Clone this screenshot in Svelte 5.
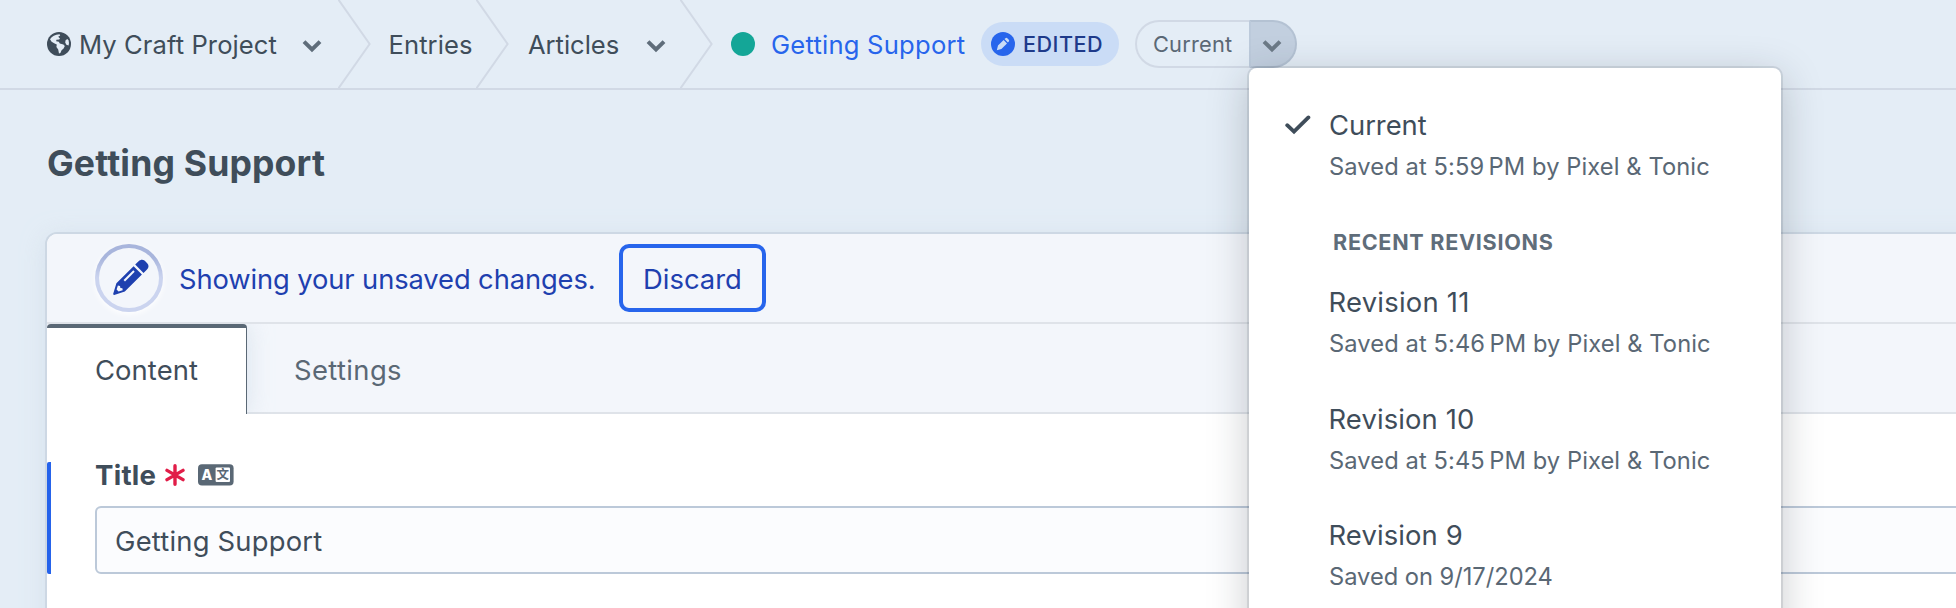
<script>
  const revisions = [
    { name: 'Revision 11', note: 'Saved at 5:46\u202fPM by Pixel & Tonic', cls: 'r11' },
    { name: 'Revision 10', note: 'Saved at 5:45\u202fPM by Pixel & Tonic', cls: '' },
    { name: 'Revision 9', note: 'Saved on 9/17/2024', cls: 'dated' }
  ];
  let title = $state('Getting Support');
</script>

{#snippet chevron()}
  <svg class="chevron" width="20" height="14" viewBox="0 0 20 14"><path d="M2 2.6 10 10.4 18 2.6" /></svg>
{/snippet}

{#snippet separator()}
  <svg class="sep" width="34" height="88" viewBox="0 0 34 88"><path d="M0 -1 31.6 44 0 89" /></svg>
{/snippet}

<div class="page">
  <header>
    <nav>
      <div class="crumb project">
        <svg class="globe" width="24" height="24" viewBox="0 0 24 24">
          <circle cx="12" cy="12" r="12" fill="#3f4d5a" />
          <path fill="#e4edf6" d="M3 7.2C5 4.4 8 2.6 12.6 2.2L13.2 3.6 11.2 4.8 13 6.4 12.2 7.6 9.4 7.8 9.2 9.2 11.8 9.8 12.8 11.4 16.4 12.6 17.8 14 16.6 16.6 14.6 18.2 13.4 21 12 21.6 11.2 17.6 9.4 15 9.8 12.4 7.6 11.4 4.6 9.8Z" />
          <path fill="#e4edf6" d="M18.6 8.2 20.4 7 21.6 8.4Q22.4 11 21.6 13.4L19.4 12.8 18.2 10.6Z" />
        </svg>
        <span class="label">My Craft Project</span>
        {@render chevron()}
      </div>
      {@render separator()}
      <div class="crumb section"><span class="label">Entries</span></div>
      {@render separator()}
      <div class="crumb group"><span class="label art">Articles</span>{@render chevron()}</div>
      {@render separator()}
      <div class="crumb entry">
        <i class="dot"></i>
        <a class="label" href="#entry">Getting Support</a>
      </div>
    </nav>
    <div class="badge">
      <svg width="24" height="24" viewBox="0 0 24 24">
        <circle cx="12" cy="12" r="12" fill="#2765ec" />
        <path fill="#cadcf6" d="M5.8 18.2 7 13.6 12.6 8 16 11.4 10.4 17ZM13.5 7.1 14.5 6.2Q15.4 5.4 16.3 6.2L17.8 7.7Q18.6 8.6 17.8 9.5L16.9 10.5Z" />
      </svg>
      <span>EDITED</span>
    </div>
    <div class="btngroup">
      <button class="current">Current</button>
      <button class="toggle" aria-label="Revisions">{@render chevron()}</button>
    </div>
  </header>

  <h1>Getting Support</h1>

  <main>
    <div class="notice">
      <div class="ring">
        <svg width="36" height="36" viewBox="0 0 36 36">
          <path fill="#1e40af" d="M3.4 24.2 20.6 7.2 28.9 15.5 11.8 32.6 1.2 35.9Q0 36 .2 34.8ZM22.2 5.6 25.6 2.2C27.6.2 30 .2 31.8 1.8L34.2 4.2C36 6 36 8.4 34 10.4L30.5 13.9Z" />
          <path stroke="#f3f6fc" stroke-width="2" d="M11.3 21.7 21 12" />
          <path fill="#f3f6fc" d="M4.9 26.6 7 27 7.4 28.9 9.4 29.2 9.7 31.2 5.5 32.5 3.6 30.6Z" />
        </svg>
      </div>
      <p>Showing your unsaved changes.</p>
      <button class="discard">Discard</button>
    </div>

    <div class="tabs">
      <div class="tab active">Content</div>
      <div class="tab settings">Settings</div>
    </div>

    <div class="field">
      <div class="heading">
        <label for="title">Title</label>
        <svg class="star" width="20" height="22" viewBox="0 0 20 22"><path d="M10 1.8V20.2M2 6.4 18 15.6M18 6.4 2 15.6" /></svg>
        <svg width="36" height="22" viewBox="0 0 36 22">
          <rect y=".2" width="35.6" height="21.4" rx="4" fill="#5a6875" />
          <text x="9" y="16" text-anchor="middle" font-size="14" font-weight="800" fill="#fff">A</text>
          <rect x="17.6" y="3.4" width="14.4" height="14.6" rx="1" fill="#fff" />
          <text class="cjk" x="24.8" y="15.4" text-anchor="middle" font-size="12.5" font-weight="700" fill="#5a6875">文</text>
        </svg>
      </div>
      <input id="title" bind:value={title} />
    </div>
  </main>

  <div class="menu">
    <div class="item">
      <svg class="check" width="26" height="20" viewBox="0 0 26 20"><path d="M2.2 10.2 9 16.6 23.4 2.4" /></svg>
      <strong class="cur">Current</strong>
      <small>Saved at 5:59&#8239;PM by Pixel &amp; Tonic</small>
    </div>
    <h2>RECENT REVISIONS</h2>
    {#each revisions as r}
      <div class="item {r.cls}">
        <strong>{r.name}</strong>
        <small>{r.note}</small>
      </div>
    {/each}
  </div>
</div>

<style>
  :global(body) { margin: 0; overflow: hidden; }
  .page {
    position: relative;
    width: 1956px;
    height: 608px;
    overflow: hidden;
    display: flex;
    flex-direction: column;
    background: #e4edf6;
    color: #3f4d5a;
    font-family: Inter, sans-serif;
  }
  button, input { font-family: inherit; margin: 0; box-sizing: border-box; }
  svg { display: block; flex: none; }

  header {
    flex: none;
    display: flex;
    align-items: center;
    height: 88px;
    padding-left: 47px;
    border-bottom: 2px solid #d1d9e5;
  }
  nav { display: flex; align-items: center; height: 88px; }
  .crumb { display: flex; align-items: center; height: 88px; box-sizing: border-box; }
  .label { font-size: 25.6px; line-height: 32px; letter-spacing: 0.08px; white-space: nowrap; padding-top: 1px; }
  .art { letter-spacing: -0.05px; }
  .chevron { fill: none; stroke: #5f6d7a; stroke-width: 4; }
  .crumb .chevron { margin: 3px 0 0 auto; }
  .sep { fill: none; stroke: #d1d9e5; stroke-width: 2; margin-right: -1px; }
  .project { width: 291px; padding-right: 16px; }
  .project .label { margin-left: 8px; }
  .section { width: 105px; padding-left: 17.5px; }
  .group { width: 171px; padding: 0 14px 0 19px; }
  .entry { padding-left: 18px; width: 268px; }
  .dot { width: 24px; height: 24px; border-radius: 50%; background: #14a697; }
  .entry .label { margin-left: 16px; color: #2765ec; text-decoration: none; letter-spacing: 0.22px; }

  .badge {
    display: flex;
    align-items: center;
    box-sizing: border-box;
    width: 138px;
    height: 44px;
    padding-left: 10px;
    border-radius: 22px;
    background: #cadcf6;
    color: #1e3a8a;
    font-size: 21.6px;
    font-weight: 500;
    letter-spacing: 0.5px;
  }
  .badge span { margin-left: 8px; }

  .btngroup { display: flex; margin-left: 16px; height: 48px; }
  .current {
    width: 114px;
    padding: 0 0 0 16px;
    text-align: left;
    border: 2px solid #d1d9e5;
    border-right: 0;
    border-radius: 24px 0 0 24px;
    background: transparent;
    color: #5a6875;
    font-size: 21.8px;
    letter-spacing: 0.2px;
  }
  .toggle {
    width: 48px;
    padding: 4px 2px 0 0;
    display: flex;
    align-items: center;
    justify-content: center;
    border: 2px solid #b4c2d3;
    border-left-color: #bccadb;
    border-radius: 0 24px 24px 0;
    background: #c2cfdf;
  }
  .toggle .chevron { stroke: #6c7a87; }

  h1 {
    flex: none;
    margin: 0;
    padding: 53px 0 0 47px;
    height: 91px;
    line-height: 41px;
    font-size: 35.6px;
    font-weight: 700;
    letter-spacing: 0.16px;
  }

  main {
    flex: none;
    width: 1940px;
    height: 400px;
    margin: 0 0 0 47px;
    border-radius: 10px 0 0 0;
    background: #fff;
    box-shadow: 0 0 0 2px #cdd8e4, 0 4px 24px rgba(200, 214, 228, 0.6);
  }
  .notice {
    display: flex;
    align-items: center;
    height: 88px;
    padding-left: 48px;
    border-bottom: 2px solid #dfe3e9;
    border-radius: 10px 0 0 0;
    background: #f3f6fb;
    color: #1e40af;
  }
  .ring {
    display: flex;
    align-items: center;
    justify-content: center;
    box-sizing: border-box;
    width: 68px;
    height: 68px;
    border: 4px solid transparent;
    border-radius: 50%;
    background:
      linear-gradient(#f3f6fb, #f3f6fb) padding-box,
      linear-gradient(#a8b5dc 20%, #cbd4ef 50%) border-box;
    box-shadow: 0 2px 6px #fff;
  }
  .ring svg { margin: -2px 0 0 4px; }
  .notice p { margin: 2px 0 0 16px; width: 440px; font-size: 27.3px; letter-spacing: -0.09px; white-space: nowrap; }
  .discard {
    width: 147px;
    height: 68px;
    padding: 2px 0 0;
    border: 4px solid #2765ec;
    border-radius: 10px;
    background: transparent;
    color: #1e40af;
    font-size: 27.4px;
    letter-spacing: 0;
  }

  .tabs { display: flex; height: 90px; background: linear-gradient(#f3f6fb 88px, #dfe3e9 88px); }
  .tab { box-sizing: border-box; line-height: 92px; font-size: 27.4px; }
  .active {
    width: 200px;
    padding-left: 48px;
    line-height: 84px;
    border-top: 4px solid #5a6875;
    border-right: 1px solid #5a6875;
    border-radius: 4px 4px 0 0;
    background: #fff;
    box-shadow: 0 0 24px rgba(200, 214, 228, 0.6);
    clip-path: inset(0 -30px 0 0);
    letter-spacing: 0.08px;
  }
  .settings { padding-left: 47px; color: #5a6875; letter-spacing: 0.38px; }

  .field {
    margin-top: 48px;
    height: 112px;
    box-sizing: border-box;
    border-left: 4px solid #2563eb;
    border-radius: 2px;
    padding-left: 44px;
  }
  .heading { display: flex; align-items: center; height: 44px; }
  .heading > * { margin-top: -18px; }
  label { width: 70px; font-size: 27.6px; line-height: 32px; font-weight: 700; letter-spacing: 0.25px; }
  .star { margin-right: 12.5px; fill: none; stroke: #e11d48; stroke-width: 3.4; stroke-linecap: round; }
  .cjk { font-family: "Noto Sans CJK SC", sans-serif; }
  input {
    display: block;
    width: 1900px;
    height: 68px;
    padding: 2px 18px 0;
    border: 2px solid #bcc9d9;
    border-radius: 6px;
    background: #fbfcfe;
    color: #3f4d5a;
    font-size: 27.4px;
    letter-spacing: 0.2px;
    outline: none;
  }

  .menu {
    position: absolute;
    left: 1249px;
    top: 68px;
    width: 532px;
    height: 620px;
    box-sizing: border-box;
    padding: 38px 0 0 80px;
    border-radius: 8px;
    background: #fff;
    box-shadow: 0 0 0 2px rgba(31, 41, 51, 0.1), 0 10px 40px rgba(31, 41, 51, 0.25);
  }
  .item { position: relative; margin-bottom: 34.5px; height: 82px; white-space: nowrap; }
  .item strong { display: block; margin: 0 0 2px -0.5px; font-size: 27.4px; font-weight: 400; line-height: 38px; letter-spacing: 0.12px; }
  .item .cur { letter-spacing: -0.03px; margin-left: 0; }
  .r11 strong { letter-spacing: 0.25px; }
  .item small { display: block; font-size: 23.7px; line-height: 42px; letter-spacing: 0.09px; color: #5a6875; }
  .dated small { letter-spacing: -0.03px; }
  .check { position: absolute; left: -44px; top: 9px; fill: none; stroke: #3f4d5a; stroke-width: 3.8; stroke-linecap: round; }
  h2 {
    margin: 39px 0 26px 4px;
    font-size: 21.6px;
    line-height: 30px;
    font-weight: 700;
    letter-spacing: 0.7px;
    color: #5f6d7a;
  }
</style>
